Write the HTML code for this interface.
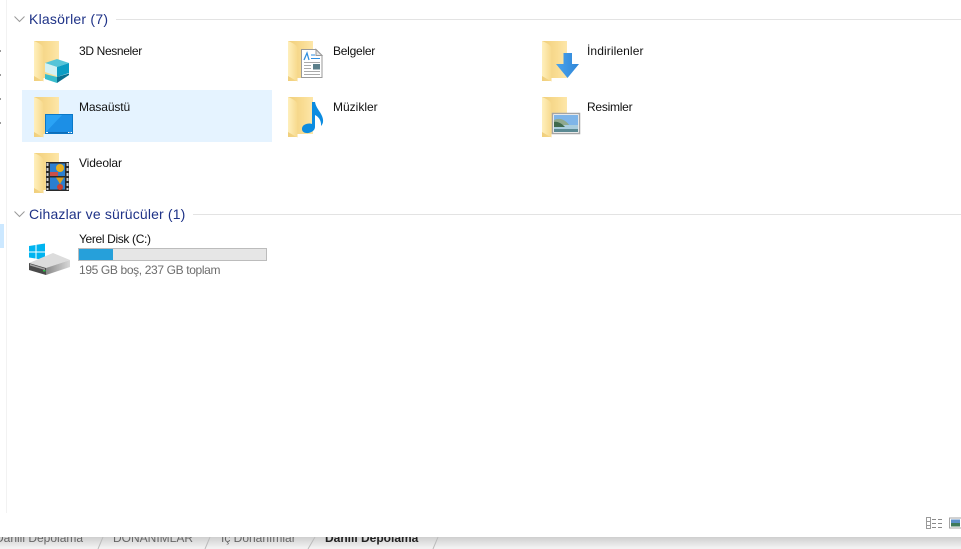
<!DOCTYPE html>
<html><head><meta charset="utf-8">
<style>
html,body{margin:0;padding:0;background:#fff}
body{width:961px;height:549px;overflow:hidden;position:relative;font-family:"Liberation Sans",sans-serif}
.a{position:absolute}
.t{position:absolute;font-size:12px;line-height:14px;color:#111;white-space:nowrap}
.h{position:absolute;font-size:14px;line-height:18px;color:#1e3287;white-space:nowrap}
.l{position:absolute;height:1px;background:#e3e3e3;right:0}
svg{position:absolute;overflow:visible}
.s{position:absolute;white-space:nowrap;font-size:12px;line-height:14px;color:#666;top:-6px}
</style></head><body>
<svg width="0" height="0" style="left:0;top:0"><defs>
<linearGradient id="fb" x1="0" y1="0" x2="1" y2="0"><stop offset="0" stop-color="#f0cf7c"/><stop offset="0.6" stop-color="#f9dc92"/><stop offset="1" stop-color="#fde7aa"/></linearGradient>
<linearGradient id="ff" x1="0" y1="0" x2="1" y2="0"><stop offset="0" stop-color="#fff0bd"/><stop offset="1" stop-color="#f7d98c"/></linearGradient>
<linearGradient id="ar" x1="0" y1="0" x2="1" y2="0"><stop offset="0" stop-color="#4aa3ec"/><stop offset="1" stop-color="#2f86d8"/></linearGradient>
<linearGradient id="fr" x1="0" y1="0" x2="1" y2="0"><stop offset="0" stop-color="#8a8a8a"/><stop offset="1" stop-color="#d8d8d8"/></linearGradient>
<g id="folder">
<path d="M0 0H25V37H9V40H0Z" fill="url(#fb)"/>
<path d="M0 0C4 1.500 8 3.500 9.500 7V40.500L0 35Z" fill="url(#ff)"/>
</g>
</defs></svg>

<div class="a" style="left:6px;top:0;width:1px;height:513px;background:#f2f2f2"></div>
<div class="a" style="left:0;top:50px;width:1px;height:2px;background:#999"></div>
<div class="a" style="left:0;top:74px;width:1px;height:2px;background:#999"></div>
<div class="a" style="left:0;top:98px;width:1px;height:2px;background:#999"></div>
<div class="a" style="left:0;top:122px;width:1px;height:2px;background:#999"></div>
<div class="a" style="left:0;top:224px;width:4px;height:24px;background:#cce8ff"></div>
<div class="a" style="left:22px;top:90px;width:250px;height:52px;background:#e5f3ff"></div>

<svg style="left:14px;top:16px" width="11" height="7"><path d="M0.500 0.500L5.500 5.500L10.500 0.500" fill="none" stroke="#9a9a9a"/></svg>
<div class="h" style="left:29px;top:10px;letter-spacing:.23px">Klasörler (7)</div>
<div class="l" style="left:116px;top:19px"></div>
<svg style="left:14px;top:211px" width="11" height="7"><path d="M0.500 0.500L5.500 5.500L10.500 0.500" fill="none" stroke="#9a9a9a"/></svg>
<div class="h" style="left:29px;top:205px;letter-spacing:.16px">Cihazlar ve sürücüler (1)</div>
<div class="l" style="left:193px;top:214px"></div>

<!-- 3D Nesneler -->
<svg style="left:34px;top:41px" width="40" height="43"><use href="#folder"/>
<path d="M11 22L23 18L35 22L23 26Z" fill="#56c4d8"/>
<path d="M11 22L23 26V35L11 31Z" fill="#d2f1f4"/>
<path d="M23 26L35 22V32L23 36Z" fill="#0b9cc4"/>
<path d="M11 33L23 36V42L11 38Z" fill="#39bccb"/>
<path d="M23 36L35 32.500V34L23 42Z" fill="#086f90"/>
</svg>
<div class="t" style="left:79px;top:44px;letter-spacing:-.35px">3D Nesneler</div>

<!-- Belgeler -->
<svg style="left:288px;top:41px" width="40" height="40"><use href="#folder"/>
<path d="M13.500 8.500H28L34 14.500V36.500H13.500Z" fill="#fff" stroke="#9a9a9a"/>
<path d="M28 8.500V14.500H34Z" fill="#e6e6e6" stroke="#9a9a9a"/>
<path d="M16 19L19 12L21 19" fill="none" stroke="#2f8fe0" stroke-width="1.300"/>
<path d="M23 14H27M23 17.500H32" stroke="#2f8fe0"/>
<path d="M16 21.500H32M16 24.500H23M16 27.500H23M16 30.500H32M16 33.500H32" stroke="#aaa"/>
<rect x="25" y="23" width="7" height="5.500" fill="#5c7f8a"/>
</svg>
<div class="t" style="left:333px;top:44px;letter-spacing:-.25px">Belgeler</div>

<!-- İndirilenler -->
<svg style="left:542px;top:41px" width="40" height="40"><use href="#folder"/>
<path d="M21.500 12H30V23H37L25.500 37L14 23H21.500Z" fill="url(#ar)"/>
</svg>
<div class="t" style="left:587px;top:44px;letter-spacing:.1px">İndirilenler</div>

<!-- Masaüstü -->
<svg style="left:34px;top:97px" width="40" height="40"><use href="#folder"/>
<rect x="11" y="17" width="28" height="20" fill="#0a78c8"/>
<rect x="12" y="18" width="26" height="17" fill="#2aa3f5"/>
<path d="M12 35L28 18H38V35Z" fill="#1c8fe6"/>
<rect x="12" y="35" width="26" height="1.300" fill="#0f6db8"/>
<path d="M12 35.500h2M34 35.500h1.500M36.500 35.500h1.500" stroke="#fff"/>
</svg>
<div class="t" style="left:79px;top:100px;letter-spacing:-.12px">Masaüstü</div>

<!-- Müzikler -->
<svg style="left:288px;top:97px" width="40" height="40"><use href="#folder"/>
<path d="M24 5H27C28 11 32 14 34 19C36 24 35 27 33 29C33.500 24 31 20 27 18V30C27 34 22 36.500 18 36C13 35.500 13 30 16 28C18.500 26.500 22 26 24 27Z" fill="#0c8ce0"/>
</svg>
<div class="t" style="left:333px;top:100px">Müzikler</div>

<!-- Resimler -->
<svg style="left:542px;top:97px" width="40" height="40"><use href="#folder"/>
<rect x="10.500" y="16.500" width="27" height="20" fill="#fff" stroke="#a5a5a5" stroke-width="1.500"/>
<rect x="12" y="18" width="24" height="17" fill="#7fb5e8"/>
<path d="M12 23C18 20 24 23 28 29H12Z" fill="#8fa98e"/>
<rect x="12" y="28" width="24" height="4" fill="#a9cddd"/>
<path d="M12 25C16 24 20 27 23 30H12Z" fill="#3f6a4d"/>
<rect x="12" y="32" width="24" height="3" fill="#5b8a93"/>
</svg>
<div class="t" style="left:587px;top:100px;letter-spacing:-.25px">Resimler</div>

<!-- Videolar -->
<svg style="left:34px;top:153px" width="40" height="40"><use href="#folder"/>
<rect x="12" y="9" width="23" height="29" fill="#2a2a2a"/>
<path d="M13.500 10v27M33.500 10v27" stroke="#cfcfcf" stroke-width="2" stroke-dasharray="3 2"/>
<rect x="16" y="10.500" width="15" height="12.500" fill="#2b7fd0"/>
<rect x="16" y="24.500" width="15" height="12" fill="#2b7fd0"/>
<circle cx="26" cy="15" r="4" fill="#e8b020"/>
<rect x="16" y="19" width="8" height="4" fill="#c9504a"/>
<path d="M22 24.500L30 24.500L26 31Z" fill="#d8a020"/>
<circle cx="26" cy="34" r="3" fill="#d04030"/>
</svg>
<div class="t" style="left:79px;top:156px;letter-spacing:-.12px">Videolar</div>

<!-- Disk -->
<svg style="left:28px;top:243px" width="46" height="36">
<path d="M1 3L7.500 2V8.500H1ZM8.500 1.800L17 .5V8.500H8.500ZM1 9.500H7.500V15.500L1 14.500ZM8.500 9.500H17V17L8.500 15.800Z" fill="#00b4f0"/>
<path d="M1 20L25 10L42 17L18 25Z" fill="#dcdcdc"/>
<path d="M18 25L42 17V24L18 32Z" fill="url(#fr)"/>
<path d="M1 20L18 25V32L1 27Z" fill="#4a4a4a"/>
<path d="M2 21L17 25.500V27L2 22.500Z" fill="#a8a8a8"/>
<rect x="15" y="27" width="2.500" height="1.500" fill="#2fc04a"/>
</svg>
<div class="t" style="left:79px;top:232px;letter-spacing:-.35px">Yerel Disk (C:)</div>
<div class="a" style="left:78px;top:248px;width:187px;height:11px;background:#e6e6e6;border:1px solid #bcbcbc"></div>
<div class="a" style="left:79px;top:249px;width:34px;height:11px;background:#26a0da"></div>
<div class="t" style="left:79px;top:263px;color:#6d6d6d;letter-spacing:-.36px">195 GB boş, 237 GB toplam</div>

<!-- view icons -->
<svg style="left:926px;top:517px" width="35" height="13">
<rect x="0.500" y="0.500" width="4" height="11" fill="#fff" stroke="#9a9a9a"/>
<path d="M0 4.500H5M0 8.500H5" stroke="#9a9a9a"/>
<path d="M6 2.500H10M12 2.500H16M6 6.500H10M12 6.500H16M6 10.500H10M12 10.500H16" stroke="#8a8a8a"/>
<rect x="23.500" y="1" width="12" height="10" fill="#fff" stroke="#a5a5a5"/>
<rect x="25" y="2.500" width="9" height="7" fill="#5b8fc9"/>
<rect x="25" y="6" width="9" height="3.500" fill="#3f7a5a"/>
</svg>

<!-- bottom strip -->
<div class="a" style="left:0;top:537px;width:961px;height:12px;overflow:hidden;background:linear-gradient(#cfcfcf,#f2f2f2 90%)">
<span class="s" style="left:-5px">Dahili Depolama</span>
<span class="s" style="left:113px">DONANIMLAR</span>
<span class="s" style="left:221px">İç Donanımlar</span>
<span class="s" style="left:325px;font-weight:bold;color:#222">Dahili Depolama</span>
<svg style="left:0;top:0" width="450" height="12"><path d="M103 0L98 12M210 0L205 12M315 0L308 12M438 0L433 12" stroke="#bbb"/></svg>
</div>
</body></html>
